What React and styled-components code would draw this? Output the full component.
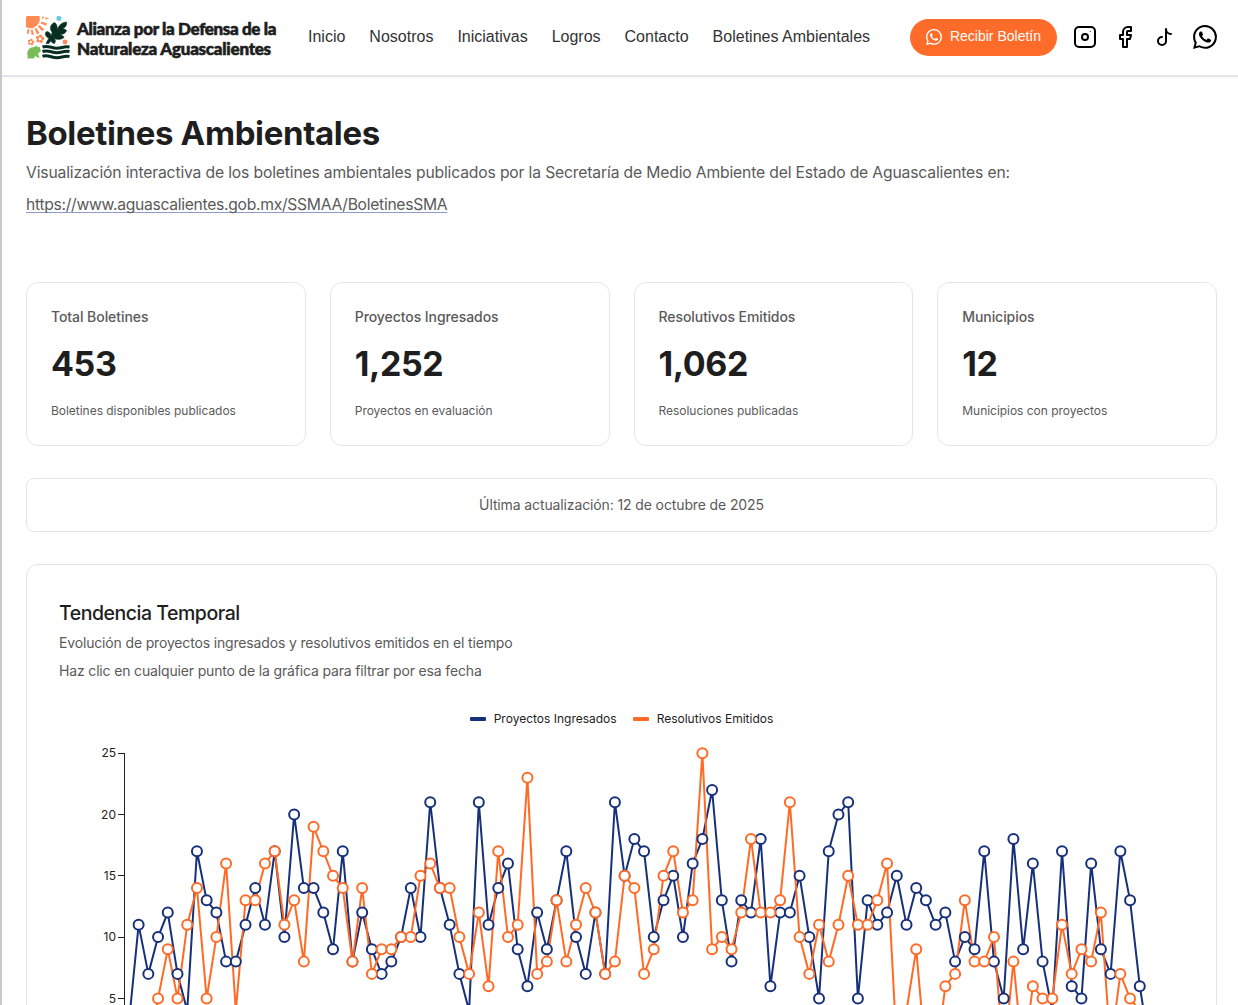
import React from 'react';
import styled, { createGlobalStyle } from 'styled-components';
import { BsWhatsapp } from 'react-icons/bs';

const GlobalStyle = createGlobalStyle`
  *, *::before, *::after { box-sizing: border-box; }
  html { background: #fff; }
  body {
    margin: 0;
    height: 1005px;
    overflow: hidden;
    background: #fff;
    color: #1e1e1e;
    font-family: Inter, 'Liberation Sans', sans-serif;
  }
  h1, h2, p { margin: 0; }
`;

const Page = styled.div`
  height: 1005px;
  overflow: hidden;
  border-left: 2px solid #c9c9cc;
`;

const Header = styled.header`
  display: flex;
  align-items: center;
  height: 77px;
  padding: 0 21px 1px 24px;
  border-bottom: 2px solid #e4e4ea;
  box-shadow: 0 1px 2px rgba(0, 0, 0, 0.04);
`;

const Brand = styled.a`
  display: flex;
  align-items: center;
  gap: 7px;
  width: 282px;
  > svg { position: relative; top: 1px; }
`;

const BrandName = styled.span`
  display: flex;
  flex-direction: column;
  padding-top: 4px;
  font: 900 17px/20px Lato, sans-serif;
  color: #1e1e1e;
  -webkit-text-stroke: 0.6px #1e1e1e;
  white-space: nowrap;
`;

const BrandLine = styled.span`
  letter-spacing: ${(p) => p.$spacing}px;
`;

const Nav = styled.nav`
  display: flex;
  gap: 24px;
  flex: 1;
`;

const NavLink = styled.a`
  font: 400 16px/24px 'Liberation Sans', Arial, sans-serif;
  color: #333;
  white-space: nowrap;
`;

const Subscribe = styled.button`
  display: flex;
  align-items: center;
  justify-content: center;
  gap: 8px;
  width: 147px;
  height: 37px;
  padding-bottom: 3px;
  border: 0;
  border-radius: 19px;
  background: #ff6b29;
  color: #fff;
  font: 400 14px/20px 'Liberation Sans', Arial, sans-serif;
  white-space: nowrap;
  svg { position: relative; top: 1px; }
`;

const Socials = styled.div`
  display: flex;
  align-items: center;
  gap: 16px;
  margin-left: 16px;
  color: #000;
  svg { display: block; }
`;

const Main = styled.main`
  padding: 35px 21px 0 24px;
`;

const Title = styled.h1`
  font-size: 33px;
  font-weight: 700;
  line-height: 42px;
  letter-spacing: -0.36px;
`;

const Intro = styled.div`
  padding-top: 3px;
`;

const Lead = styled.p`
  font-size: ${(p) => p.$size}px;
  line-height: 32px;
  letter-spacing: ${(p) => p.$spacing}px;
  color: #5a5a5a;
  white-space: nowrap;
`;

const Source = styled.a`
  text-decoration: underline 1px #8f9bcb;
  text-underline-offset: 2px;
  text-decoration-skip-ink: none;
`;

const Stats = styled.section`
  display: grid;
  grid-template-columns: repeat(4, 1fr);
  gap: 24px;
  margin-top: 61px;
`;

const Card = styled.article`
  border: 1px solid #e4e5f3;
  border-radius: 12px;
  background: #fff;
`;

const StatCard = styled(Card)`
  display: flex;
  flex-direction: column;
  height: 164px;
  padding: 24px;
`;

const StatLabel = styled.span`
  font-size: 14px;
  font-weight: 500;
  line-height: 20px;
  letter-spacing: -0.07px;
  color: #5a5a5a;
`;

const StatValue = styled.span`
  margin-top: 16px;
  font-size: 34px;
  font-weight: 700;
  line-height: 42px;
  letter-spacing: -0.4px;
`;

const StatNote = styled.span`
  margin-top: 17px;
  font-size: 12px;
  line-height: 18px;
  letter-spacing: -0.03px;
  color: #5a5a5a;
`;

const Updated = styled(Card)`
  display: flex;
  align-items: center;
  justify-content: center;
  height: 54px;
  margin-top: 32px;
  padding-bottom: 2px;
  border-radius: 8px;
  font-size: 14px;
  letter-spacing: -0.12px;
  color: #5a5a5a;
`;

const ChartCard = styled(Card)`
  height: 600px;
  margin-top: 32px;
  padding: 32px;
`;

const ChartTitle = styled.h2`
  font-size: 19.5px;
  font-weight: 500;
  line-height: 32px;
  letter-spacing: -0.48px;
`;

const ChartHint = styled.p`
  font-size: 14px;
  line-height: 28px;
  letter-spacing: -0.16px;
  color: #5a5a5a;
`;

const Legend = styled.div`
  display: flex;
  justify-content: center;
  gap: 16px;
  margin-top: 25px;
`;

const LegendItem = styled.span`
  display: flex;
  align-items: center;
  gap: 8px;
  font-size: 12px;
  line-height: 18px;
  &::before {
    content: '';
    width: 16px;
    height: 4px;
    border-radius: 1px;
    background: ${(p) => p.$color};
  }
`;

const Plot = styled.svg`
  display: block;
  margin-top: 6px;
  text { font: 400 12px Inter, sans-serif; fill: #222; }
`;

const NAVY = '#17307a';
const ORANGE = '#ff6b26';

const ingresados = [
  3, 11, 7, 10, 12, 7, 4, 17, 13, 12, 8, 8, 11, 14, 11, 17, 10, 20, 14, 14,
  12, 9, 17, 8, 12, 9, 7, 8, 10, 14, 10, 21, 14, 11, 7, 4, 21, 11, 14, 16,
  9, 6, 12, 9, 13, 17, 10, 7, 12, 7, 21, 15, 18, 17, 10, 13, 15, 10, 16, 18,
  22, 13, 8, 13, 12, 18, 6, 12, 12, 15, 10, 5, 17, 20, 21, 5, 13, 11, 12, 15,
  11, 14, 13, 11, 12, 8, 10, 9, 17, 8, 5, 18, 9, 16, 8, 4, 17, 6, 5, 16,
  9, 7, 17, 13, 6, 1,
];

const emitidos = [
  0, 0, 1, 5, 9, 5, 11, 14, 5, 10, 16, 4, 13, 13, 16, 17, 11, 13, 8, 19,
  17, 15, 14, 8, 14, 7, 9, 9, 10, 10, 15, 16, 14, 14, 10, 7, 12, 6, 17, 10,
  11, 23, 7, 8, 13, 8, 11, 14, 12, 7, 8, 15, 14, 7, 9, 15, 17, 12, 13, 25,
  9, 10, 9, 12, 18, 12, 12, 13, 21, 10, 7, 11, 8, 11, 15, 11, 11, 13, 16, 1,
  4, 9, 0, 0, 6, 7, 13, 8, 8, 10, 0, 8, 0, 6, 5, 5, 11, 7, 9, 8,
  12, 1, 7, 5, 4, 3,
];

const px = (i) => 69.9 + i * 9.72;
const py = (v) => 19.2 + (25 - v) * 12.26;

function Series({ data, color }) {
  return (
    <polyline
      points={data.map((v, i) => `${px(i)},${py(v)}`).join(' ')}
      fill="none"
      stroke={color}
      strokeWidth="2"
      strokeLinejoin="round"
    />
  );
}

function Markers({ data, color }) {
  return data.map((v, i) => (
    <circle key={i} cx={px(i)} cy={py(v)} r="5" fill="#fff" stroke={color} strokeWidth="2" />
  ));
}

function Flower({ x, y, r }) {
  const petals = [0, 1, 2, 3, 4].map((k) => (k * 72 - 80) * (Math.PI / 180));
  return (
    <g fill="#ff8b54">
      {petals.map((a) => (
        <circle key={a} cx={x + Math.cos(a) * r} cy={y + Math.sin(a) * r} r={r * 0.62} />
      ))}
      <circle cx={x} cy={y} r={r * 0.5} fill="#fff" />
    </g>
  );
}

function Logo() {
  return (
    <svg width="44" height="44" viewBox="0 0 44 44">
      <g fill="#ff8b54">
        <path d="M0 1.5Q0 0 1.500 0H13.500Q15 5 11 9.500Q6 14 0 11z" />
        <path d="M16 0.800h3l-3 2.400zM19.500 1.200l3.500 1-3.500 1.600zM15.500 5.500l5.500 2-1 2.300-5.200-2.300zM13.500 9l4.700 4.300-2.200 1.900-4-4.700zM10.500 12l3 5.300-2.500 1-2.500-5.600zM6.500 13.600l1.600 4.800-2.600.3-.6-4.900zM1.500 13l2 .6-.8 4.400-1.700-.3z" />
        <circle cx="39" cy="26" r="2.4" />
      </g>
      <Flower x={5} y={26} r={2.1} />
      <Flower x={14} y={22.8} r={2.7} />
      <circle cx="32.900" cy="2.400" r="2.500" fill="#6cc7e5" />
      <path
        fill="#062f22"
        stroke="#062f22"
        strokeWidth="0.5"
        d="M20 27.500C21 25 21.500 24 23 22.500C19 20.500 18.500 17 20.500 15.500C22.500 15.500 24.500 17 25.200 19.500C25.800 18 26 17 26 16C23 13 24.500 8 28.500 6.500C31 8 31.500 10.500 31 13.500C33 9 36.500 6 40.500 6C41.500 9 39 12 36 13.500C38 12.500 40.500 13.500 40.500 15C39 18 36 18.500 33.500 18.500C36 19 38 20 38 21.500C35 24 31 23.800 28.500 22.500C30 24.500 29.500 26 28.500 27.500C26.500 27.500 25.500 26 25 25L22.500 27.800z"
      />
      <path
        fill="#78bd56"
        d="M1 42.500C1.800 41.500 2 41 1.500 39C0.500 34 4 31 8.500 31C9 29.500 11 29.500 11.500 31C13 30.500 14.500 31.500 14 33C15.500 34.500 14.500 36.500 12 37C12.500 39 12.500 40 14 41.500H11L9.500 39.500L8 42.500z"
      />
      <g stroke="#062f22" strokeWidth="3.1" fill="none">
        <path d="M16.500 31C22 29 26 32.500 31 32.300S38 30 43.500 31M16.500 35.500C22 33.500 26 37 31 36.800S38 34.500 43.500 35.500M16.500 40.200C22 38.200 26 42 31 41.800S38 39.500 43.500 40.500" />
      </g>
    </svg>
  );
}

const stroke = {
  width: 24,
  height: 24,
  viewBox: '0 0 24 24',
  fill: 'none',
  stroke: 'currentColor',
  strokeWidth: 2,
  strokeLinecap: 'round',
  strokeLinejoin: 'round',
};

const stats = [
  ['Total Boletines', '453', 'Boletines disponibles publicados'],
  ['Proyectos Ingresados', '1,252', 'Proyectos en evaluación'],
  ['Resolutivos Emitidos', '1,062', 'Resoluciones publicadas'],
  ['Municipios', '12', 'Municipios con proyectos'],
];

export default function App() {
  return (
    <Page>
      <GlobalStyle />
      <Header>
        <Brand>
          <Logo />
          <BrandName>
            <BrandLine $spacing={-0.35}>Alianza por la Defensa de la</BrandLine>
            <BrandLine $spacing={-0.25}>Naturaleza Aguascalientes</BrandLine>
          </BrandName>
        </Brand>
        <Nav>
          {['Inicio', 'Nosotros', 'Iniciativas', 'Logros', 'Contacto', 'Boletines Ambientales'].map((t) => (
            <NavLink key={t}>{t}</NavLink>
          ))}
        </Nav>
        <Subscribe>
          <BsWhatsapp size={16} />
          Recibir Boletín
        </Subscribe>
        <Socials>
          <svg {...stroke}>
            <rect x="2" y="2" width="20" height="20" rx="4" />
            <circle cx="12" cy="12" r="3" />
            <path d="M17.3 6.5v.01" strokeWidth="1" />
          </svg>
          <svg {...stroke}>
            <path d="M18 2h-3a5 5 0 0 0-5 5v3H7v4h3v8h4v-8h3l1-4h-4V7a1 1 0 0 1 1-1h3z" />
          </svg>
          <svg {...stroke}>
            <path d="M9 12a4 4 0 1 0 4 4V4a5 5 0 0 0 5 5" />
          </svg>
          <BsWhatsapp size={24} />
        </Socials>
      </Header>
      <Main>
        <Title>Boletines Ambientales</Title>
        <Intro>
          <Lead $size={15.7} $spacing={-0.16}>
            Visualización interactiva de los boletines ambientales publicados por la Secretaría de Medio Ambiente del Estado de Aguascalientes en:
          </Lead>
          <Lead $size={15.7} $spacing={-0.3}>
            <Source>https://www.aguascalientes.gob.mx/SSMAA/BoletinesSMA</Source>
          </Lead>
        </Intro>
        <Stats>
          {stats.map(([label, value, note]) => (
            <StatCard key={label}>
              <StatLabel>{label}</StatLabel>
              <StatValue>{value}</StatValue>
              <StatNote>{note}</StatNote>
            </StatCard>
          ))}
        </Stats>
        <Updated>Última actualización: 12 de octubre de 2025</Updated>
        <ChartCard>
          <ChartTitle>Tendencia Temporal</ChartTitle>
          <ChartHint>Evolución de proyectos ingresados y resolutivos emitidos en el tiempo</ChartHint>
          <ChartHint>Haz clic en cualquier punto de la gráfica para filtrar por esa fecha</ChartHint>
          <Legend>
            <LegendItem $color={NAVY}>Proyectos Ingresados</LegendItem>
            <LegendItem $color={ORANGE}>Resolutivos Emitidos</LegendItem>
          </Legend>
          <Plot width="1125" height="340">
            <path d="M65.500 19V330" stroke="#222" fill="none" />
            {[25, 20, 15, 10, 5].map((v) => (
              <g key={v}>
                <path d={`M59 ${Math.floor(py(v)) + 0.5}h7`} stroke="#222" />
                <text x="57" y={py(v) + 4.2} textAnchor="end">{v}</text>
              </g>
            ))}
            <Series data={ingresados} color={NAVY} />
            <Series data={emitidos} color={ORANGE} />
            <Markers data={ingresados} color={NAVY} />
            <Markers data={emitidos} color={ORANGE} />
          </Plot>
        </ChartCard>
      </Main>
    </Page>
  );
}
